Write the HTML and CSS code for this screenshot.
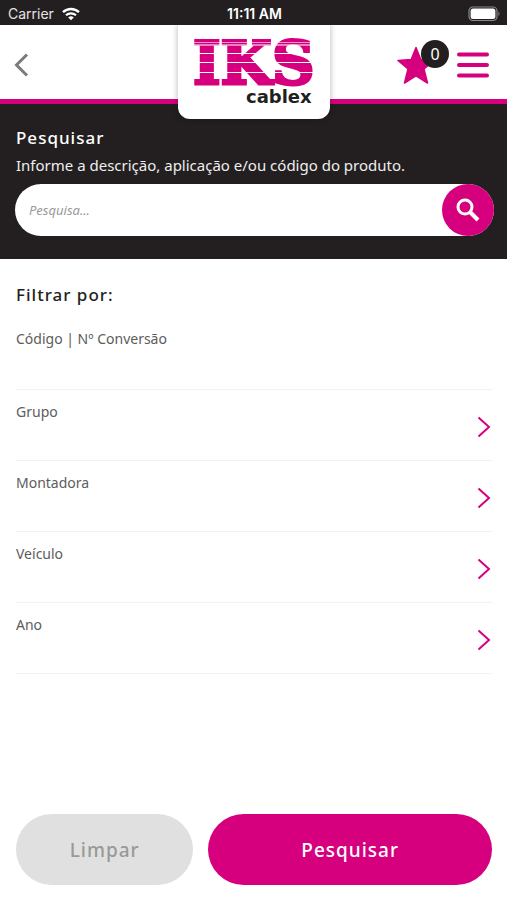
FILE: index.html
```html
<!DOCTYPE html>
<html lang="pt-BR">
<head>
<meta charset="utf-8">
<meta name="viewport" content="width=device-width, initial-scale=1">
<title>IKS Cablex</title>
<link rel="stylesheet" href="styles.css">
</head>
<body>
<div class="status">
  <div class="carrier">
    <span>Carrier</span>
    <svg width="18" height="14" viewBox="0 0 18 14" aria-hidden="true">
      <path d="M1 5.2a11.5 11.5 0 0 1 16 0" fill="none" stroke="#fff" stroke-width="2.4"/>
      <path d="M4 8.3a7.2 7.2 0 0 1 10 0" fill="none" stroke="#fff" stroke-width="2.2"/>
      <path d="M6.2 10.4a4.2 4.2 0 0 1 5.6 0L9 13.2z" fill="#fff"/>
    </svg>
  </div>
  <span class="clock">11:11 AM</span>
  <svg class="battery" width="33" height="16" viewBox="0 0 33 16" aria-hidden="true">
    <rect x="1" y="1" width="28" height="13.5" rx="4" fill="none" stroke="#8b8889" stroke-width="1.2"/>
    <rect x="2.6" y="2.6" width="24.8" height="10.3" rx="2.5" fill="#fff"/>
    <path d="M30.5 5.5q2 2.2 0 4.6z" fill="#8b8889"/>
  </svg>
</div>
<header class="header">
  <button class="icon-button" type="button" aria-label="Voltar">
    <svg width="16" height="26" viewBox="0 0 16 26"><path d="M13 2.5 2.500 13 13 23.5" fill="none" stroke="#7b7b7b" stroke-width="3"/></svg>
  </button>
  <a class="logo" href="#" aria-label="IKS Cablex">
    <svg width="152" height="94" viewBox="0 0 152 94">
      <text class="logo-main" x="15" y="59">IKS</text>
      <path d="M10 20h130M10 28.5h130M10 37.5h130M10 47.5h130" stroke="#fff" stroke-width="1"/>
      <path d="M10 17.500h130" stroke="#fff" stroke-width=".6"/>
      <text class="logo-sub" x="68" y="78">cablex</text>
    </svg>
  </a>
  <div class="actions">
    <button class="icon-button favorites" type="button" aria-label="Favoritos">
      <svg width="38" height="38" viewBox="0 0 38 38"><path d="M19 1.5 23.8 13.5 37 14.5 27 23 30.5 37 19 29.8 7.5 37 11 23 1 14.5 14.2 13.5z" fill="#d6007f" stroke="#d6007f" stroke-width="1.5" stroke-linejoin="round"/></svg>
      <span class="badge">0</span>
    </button>
    <button class="icon-button" type="button" aria-label="Menu">
      <svg width="32" height="26" viewBox="0 0 32 26"><path d="M2 2.5h28M2 13h28M2 23.5h28" stroke="#d6007f" stroke-width="4" stroke-linecap="round"/></svg>
    </button>
  </div>
</header>
<section class="search">
  <h1 class="title">Pesquisar</h1>
  <label class="hint" for="q">Informe a descrição, aplicação e/ou código do produto.</label>
  <form class="search-box">
    <input class="search-input" id="q" type="text" placeholder="Pesquisa...">
    <button class="search-button" type="button" aria-label="Buscar">
      <svg width="24" height="24" viewBox="0 0 24 24" fill="none" stroke="#fff"><circle cx="9" cy="9" r="7" stroke-width="3"/><path d="M14 14l8 8" stroke-width="4"/></svg>
    </button>
  </form>
</section>
<main class="filters">
  <h2 class="title">Filtrar por:</h2>
  <div class="row code">
    <label for="code">Código | Nº Conversão</label>
    <input class="code-input" id="code" type="text">
  </div>
  <button class="row" type="button"><span>Grupo</span><svg class="chevron" width="14" height="22" viewBox="0 0 14 22"><path d="M1.5 1.5 12 11 1.5 20.5"/></svg></button>
  <button class="row" type="button"><span>Montadora</span><svg class="chevron" width="14" height="22" viewBox="0 0 14 22"><path d="M1.5 1.5 12 11 1.5 20.5"/></svg></button>
  <button class="row" type="button"><span>Veículo</span><svg class="chevron" width="14" height="22" viewBox="0 0 14 22"><path d="M1.5 1.5 12 11 1.5 20.5"/></svg></button>
  <button class="row" type="button"><span>Ano</span><svg class="chevron" width="14" height="22" viewBox="0 0 14 22"><path d="M1.5 1.5 12 11 1.5 20.5"/></svg></button>
</main>
<footer class="footer">
  <button class="button clear" type="button">Limpar</button>
  <button class="button submit" type="button">Pesquisar</button>
</footer>
</body>
</html>
```
FILE: styles.css
```css
* { box-sizing: border-box; }

body {
  margin: 0;
  min-height: 100vh;
  display: flex;
  flex-direction: column;
  background: #fff;
  color: #231f20;
  font-family: "Noto Sans", sans-serif;
}

button, input {
  margin: 0;
  padding: 0;
  border: 0;
  background: none;
  font: inherit;
  color: inherit;
}

svg { display: block; }

.status {
  display: grid;
  grid-template-columns: 1fr auto 1fr;
  align-items: center;
  height: 25px;
  padding: 2px 6px 0 8px;
  background: #231f20;
  color: #fff;
  font-family: Inter, sans-serif;
  font-size: 14px;
}

.carrier {
  display: flex;
  align-items: center;
  gap: 8px;
  color: #e4e4e4;
}

.clock { font-weight: 600; }

.battery { justify-self: end; }

.header {
  position: relative;
  display: flex;
  align-items: center;
  justify-content: space-between;
  height: 79px;
  padding: 6px 18px 0 14px;
  border-bottom: 5px solid #d6007f;
}

.icon-button { cursor: pointer; }

.logo {
  position: absolute;
  top: 0;
  left: 50%;
  transform: translateX(-50%);
  border-radius: 0 0 12px 12px;
  background: #fff;
  box-shadow: 0 0 6px rgba(0, 0, 0, 0.3);
  clip-path: inset(0 -8px -8px -8px);
}

.logo-main {
  fill: #d6007f;
  stroke: #d6007f;
  stroke-width: 3px;
  font: bold 59px "DejaVu Serif", serif;
}

.logo-sub {
  fill: #231f20;
  font: bold 18px "DejaVu Sans", sans-serif;
}

.actions {
  display: flex;
  align-items: center;
  gap: 22px;
}

.favorites { position: relative; }

.badge {
  position: absolute;
  top: -6px;
  right: -14px;
  width: 28px;
  height: 28px;
  border-radius: 50%;
  background: #231f20;
  color: #fff;
  font-size: 16px;
  line-height: 28px;
  text-align: center;
}

.search {
  padding: 22px 13px 23px 15px;
  background: #231f20;
  color: #fff;
}

.title {
  margin: 0;
  font-size: 17px;
  font-weight: 500;
  line-height: 24px;
  letter-spacing: 1px;
}

.search .title, .hint { padding-left: 1px; }

.hint {
  display: block;
  margin: 3px 0 7px;
  color: #eee;
  font-size: 15px;
  line-height: 24px;
}

.search-box {
  display: flex;
  height: 52px;
  border-radius: 26px;
  background: #fff;
}

.search-input {
  flex: 1;
  min-width: 0;
  padding-left: 14px;
  font-size: 13px;
  font-style: italic;
}

.search-input::placeholder { color: #999; }

.search-button {
  display: grid;
  place-items: center;
  width: 52px;
  border-radius: 50%;
  background: #d6007f;
}

.filters {
  display: flex;
  flex-direction: column;
  padding: 24px 14px 0 16px;
}

.row {
  display: flex;
  justify-content: space-between;
  height: 71px;
  padding: 12px 2px 0 0;
  border-bottom: 1px solid #f3f3f3;
  color: #5c5c5c;
  font-size: 14px;
  line-height: 20px;
  text-align: left;
}

.code {
  flex-direction: column;
  height: 83px;
  padding-top: 22px;
}

.code-input { height: 30px; }

.chevron {
  margin-top: 14px;
  fill: none;
  stroke: #d6007f;
  stroke-width: 2;
}

.footer {
  display: flex;
  gap: 15px;
  margin-top: auto;
  padding: 15px 15px 15px 16px;
}

.button {
  flex: 8 1 0;
  height: 71px;
  border-radius: 36px;
  font-size: 19px;
  font-weight: 500;
  letter-spacing: 1px;
}

.clear {
  flex-grow: 5;
  background: #e0e0e0;
  color: #999;
}

.submit {
  background: #d6007f;
  color: #fff;
}
```
